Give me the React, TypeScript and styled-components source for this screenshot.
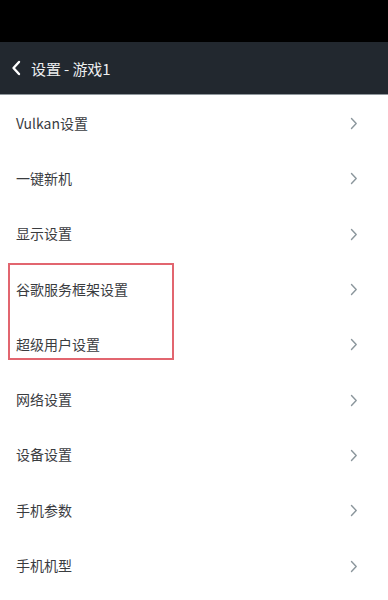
import { FC } from 'react';
import styled, { createGlobalStyle } from 'styled-components';

const GlobalStyle = createGlobalStyle`
  html, body {
    margin: 0;
    padding: 0;
    background: #ffffff;
  }
  body {
    font-family: 'Noto Sans CJK SC', 'Roboto', 'Noto Sans', sans-serif;
  }
`;

const Screen = styled.div`
  width: 388px;
  height: 600px;
  display: flex;
  flex-direction: column;
  background: #ffffff;
  overflow: hidden;
`;

const StatusBar = styled.div`
  height: 42px;
  background: #000000;
`;

const Header = styled.div`
  height: 52px;
  display: flex;
  align-items: center;
  gap: 9px;
  padding-left: 10px;
  background: #22282f;
  border-bottom: 1.5px solid #8f979c;
`;

const Title = styled.span`
  color: #eceef0;
  font-size: 15px;
  letter-spacing: -0.1px;
`;

const List = styled.div`
  position: relative;
  display: flex;
  flex-direction: column;
  padding-top: 1px;
`;

const Row = styled.div`
  height: 55.3px;
  display: flex;
  align-items: center;
  justify-content: space-between;
  padding: 0 30px 0 16px;
`;

const Label = styled.span`
  color: #3a3c3f;
  font-size: 14px;
  line-height: 1;
  margin-top: -2px;
`;

const Highlight = styled.div`
  position: absolute;
  left: 8px;
  top: 168px;
  width: 162px;
  height: 93px;
  border: 2px solid #e2656f;
`;

const BackIcon: FC = () => (
  <svg width="12" height="18" viewBox="0 0 12 18">
    <path
      d="M9 3 L3.5 9 L9 15"
      fill="none"
      stroke="#ffffff"
      strokeWidth="2.4"
      strokeLinecap="round"
      strokeLinejoin="round"
    />
  </svg>
);

const Chevron: FC = () => (
  <svg width="8" height="13" viewBox="0 0 8 13">
    <path
      d="M1.5 1.5 L6.2 6.5 L1.5 11.5"
      fill="none"
      stroke="#8b969c"
      strokeWidth="1.4"
      strokeLinecap="round"
      strokeLinejoin="round"
    />
  </svg>
);

const items = [
  'Vulkan设置',
  '一键新机',
  '显示设置',
  '谷歌服务框架设置',
  '超级用户设置',
  '网络设置',
  '设备设置',
  '手机参数',
  '手机机型',
];

const App: FC = () => (
  <>
    <GlobalStyle />
    <Screen>
      <StatusBar />
      <Header>
        <BackIcon />
        <Title>设置 - 游戏1</Title>
      </Header>
      <List>
        {items.map((item) => (
          <Row key={item}>
            <Label>{item}</Label>
            <Chevron />
          </Row>
        ))}
        <Highlight />
      </List>
    </Screen>
  </>
);

export default App;
